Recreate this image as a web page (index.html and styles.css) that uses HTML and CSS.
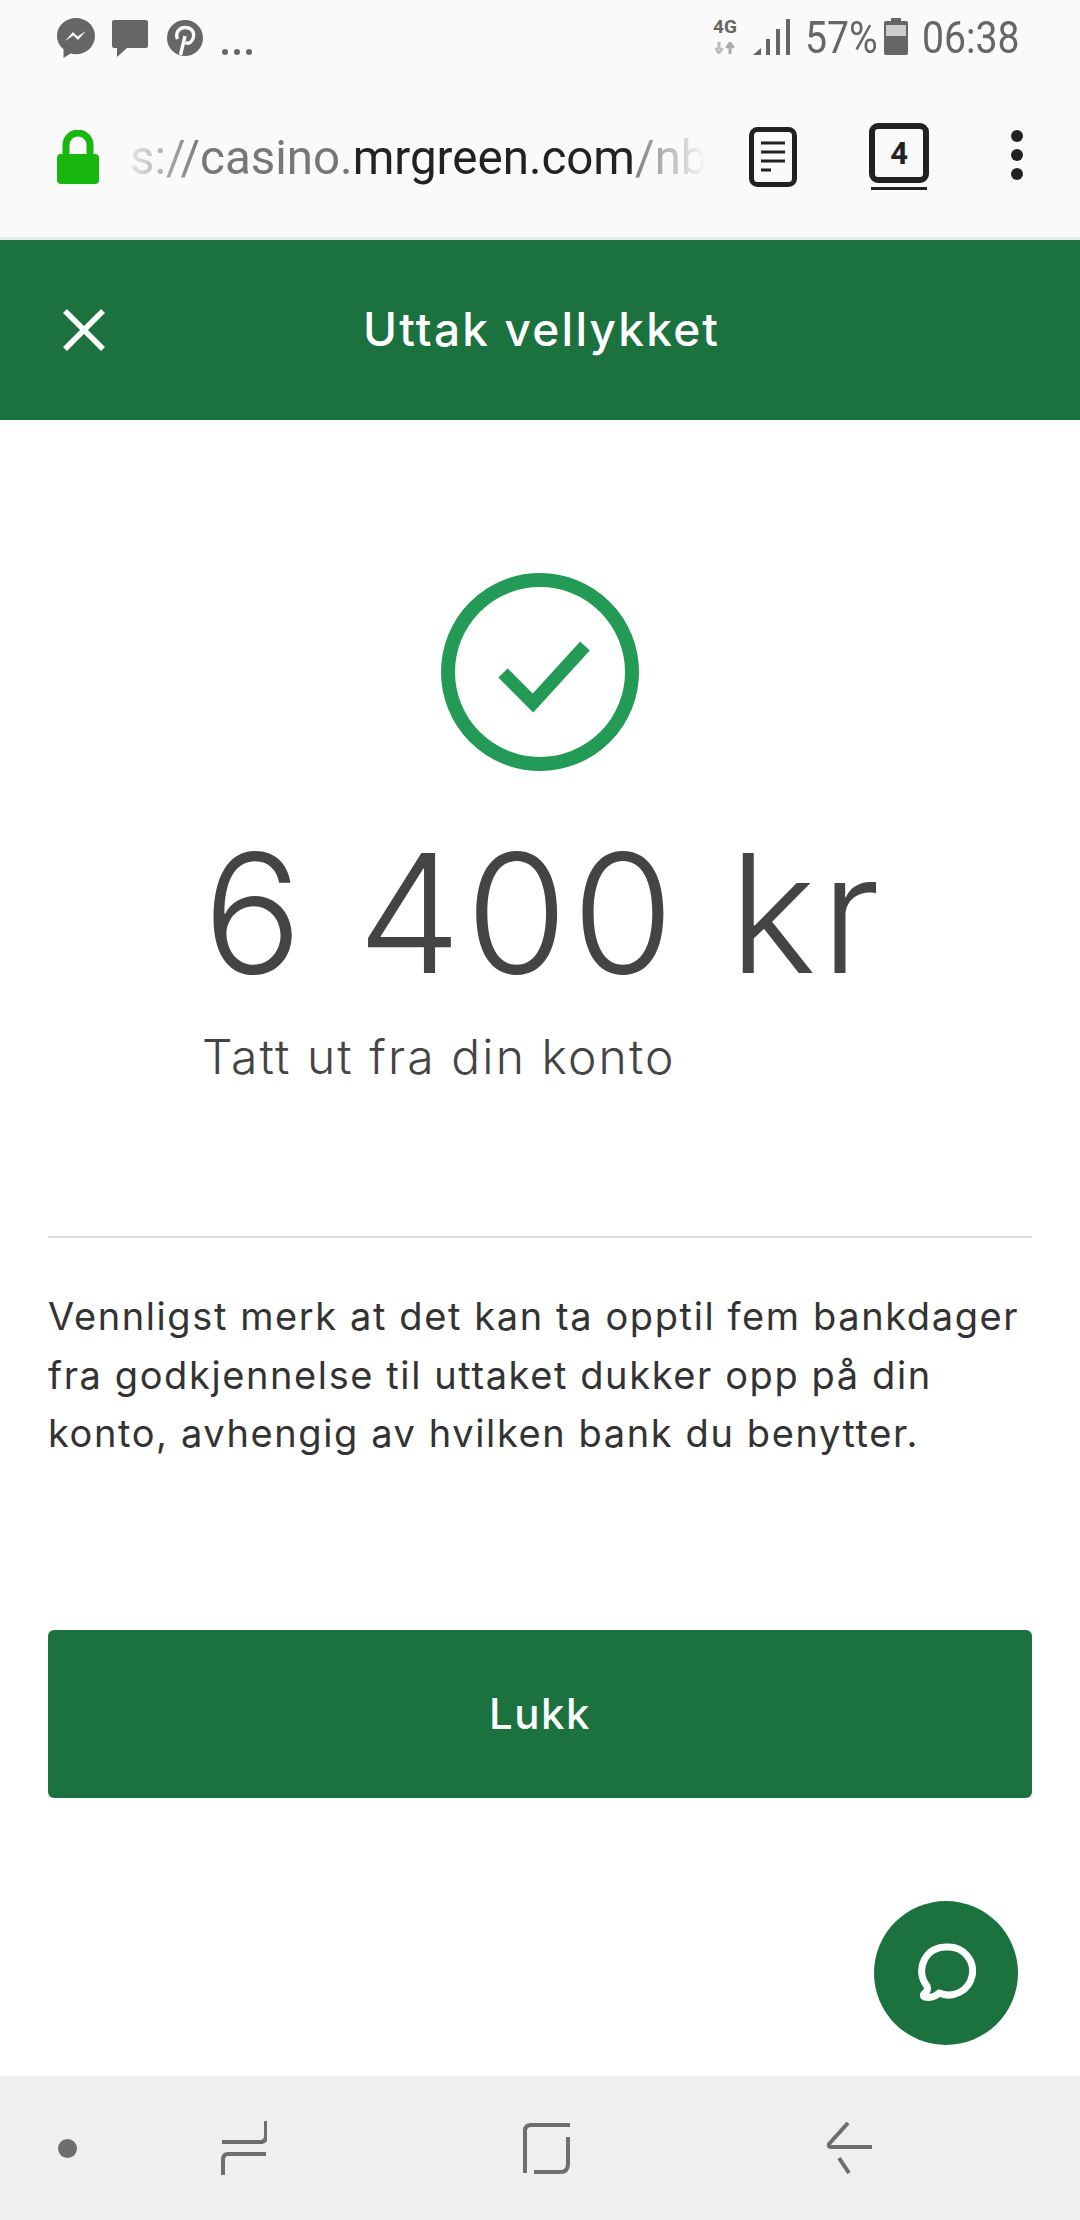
FILE: index.html
```html
<!DOCTYPE html>
<html lang="nb">
	<head>
		<meta charset="UTF-8" />
		<meta name="viewport" content="width=device-width, initial-scale=1.0" />
		<title>Uttak vellykket</title>
		<link rel="stylesheet" href="styles.css">
	</head>
	<body>
		<div class="statusbar">
			<div class="status-left">
				<svg class="ic-msg" viewBox="0 0 38 40"><path d="M19 0C8.500 0 0 7.900 0 17.800c0 5.400 2.500 10.100 6.500 13.400V40l7-4.400c1.700.4 3.600.7 5.500.7 10.500 0 19-8.200 19-18.300S29.500 0 19 0z" fill="#666"/><path d="M8 23l8-9 4.500 4.500L29 13l-8 9-4.500-4.500z" fill="#fafafa"/></svg>
				<svg class="ic-chat" viewBox="0 0 36 37"><path d="M2 0h32a2 2 0 0 1 2 2v24a2 2 0 0 1-2 2H15L5 37v-9H2a2 2 0 0 1-2-2V2a2 2 0 0 1 2-2z" fill="#666"/></svg>
				<svg class="ic-pin" viewBox="0 0 36 36"><circle cx="18" cy="18" r="18" fill="#666"/><path d="M13.500 35l4.500-19M10.500 19c-2.500-6 1.500-11.500 7.500-11.500 6.500 0 9.500 4.500 8.500 9.500s-5 7.500-8 5.500" fill="none" stroke="#fafafa" stroke-width="3.400"/></svg>
				<span class="status-more"></span>
			</div>
			<div class="status-right">
				<div class="net">
					<span class="net-label">4G</span>
					<svg class="net-arrows" viewBox="0 0 22 12"><path d="M5 0v7M1.500 6L5 11l3.500-5" fill="none" stroke="#bbb" stroke-width="3"/><path d="M16 12V4M12.500 6L16 1l3.500 5" fill="none" stroke="#aaa" stroke-width="3"/></svg>
				</div>
				<svg class="ic-signal" viewBox="0 0 37 36"><path d="M0 36l8-7v7zM13 20h4v16h-4zM23 10h4v26h-4zM33 0h4v36h-4z" fill="#666"/></svg>
				<span class="status-text pct">57%</span>
				<svg class="ic-battery" viewBox="0 0 24 37"><path d="M7 0h10v3h5a2 2 0 0 1 2 2v30a2 2 0 0 1-2 2H2a2 2 0 0 1-2-2V5a2 2 0 0 1 2-2h5z" fill="#666"/><rect x="2" y="7" width="20" height="11" fill="#ccc"/></svg>
				<span class="status-text clock">06:38</span>
			</div>
		</div>

		<div class="urlbar">
			<svg class="ic-lock" viewBox="0 0 42 54"><path d="M9 26V15a12 12 0 0 1 24 0v11" fill="none" stroke="#17b70f" stroke-width="7"/><rect y="24" width="42" height="30" rx="4" fill="#17b70f"/></svg>
			<div class="url"><span class="url-dim">s://casino.</span><span class="url-host">mrgreen.com</span><span class="url-dim">/nb</span></div>
			<svg class="ic-doc" viewBox="0 0 48 60"><rect x="2.500" y="2.500" width="43" height="55" rx="6" fill="none" stroke="#222" stroke-width="5"/><path d="M12 16h24M12 25h24M12 34h24M12 43h10" stroke="#222" stroke-width="3"/></svg>
			<div class="tabs"><span class="tabs-num">4</span></div>
			<div class="menu"><span></span><span></span><span></span></div>
		</div>

		<header class="topbar">
			<svg class="ic-close" viewBox="0 0 44 44"><path d="M3 3l38 38M41 3L3 41" fill="none" stroke="#fff" stroke-width="5.500"/></svg>
			<h1>Uttak vellykket</h1>
		</header>

		<main class="content">
			<svg class="ic-ok" viewBox="0 0 198 198"><circle cx="99" cy="99" r="92" fill="none" stroke="#239b56" stroke-width="14"/><path d="M62 100l30 30 52-57" fill="none" stroke="#239b56" stroke-width="13"/></svg>
			<div class="amount">6 400 kr</div>
			<div class="amount-note">Tatt ut fra din konto</div>
			<hr class="divider" />
			<p class="message">Vennligst merk at det kan ta opptil fem bankdager fra godkjennelse til uttaket dukker opp på din konto, avhengig av hvilken bank du benytter.</p>
			<button class="btn">Lukk</button>
			<div class="chat-fab">
				<svg viewBox="0 0 60 60"><path d="M32 4a24 24 0 1 1-9 46c-4 4-9 5-14 4-2-.5-2-2-1-3 3-2 4-5 3-8A24 24 0 0 1 32 4z" fill="none" stroke="#fff" stroke-width="7" stroke-linejoin="round"/></svg>
			</div>
		</main>

		<nav class="navbar">
			<span class="nav-dot"></span>
			<svg class="ic-recent" viewBox="0 0 46 54"><path d="M45 0v15q0 6-6 6H1M45 33H7q-5 0-5 6v15" fill="none" stroke="#6e6e6e" stroke-width="4"/></svg>
			<svg class="ic-home" viewBox="0 0 50 52"><path d="M48 3H9Q3 3 3 9v42M46 15v27q0 8-8 8H12" fill="none" stroke="#6e6e6e" stroke-width="4"/></svg>
			<svg class="ic-back" viewBox="0 0 46 52"><path d="M22 1L3 22q-1 3 2 3h41M13 36l10 15" fill="none" stroke="#6e6e6e" stroke-width="4"/></svg>
		</nav>
	</body>
</html>
```
FILE: styles.css
```css
:root {
	box-sizing: border-box;
}
*,
::before,
::after {
	box-sizing: inherit;
}
body {
	margin: 0;
	width: 1080px;
	height: 2220px;
	display: flex;
	flex-direction: column;
	overflow: hidden;
	background-color: #fff;
	font-family: Inter, "Noto Sans", sans-serif;
}
svg {
	display: block;
	flex: none;
}

/* status bar */
.statusbar {
	height: 90px;
	padding: 18px 62px 0 57px;
	display: flex;
	justify-content: space-between;
	align-items: flex-start;
	background-color: #fafafa;
}
.status-left,
.status-right {
	display: flex;
	align-items: flex-start;
}
.ic-msg {
	width: 38px;
	height: 40px;
}
.ic-chat {
	width: 36px;
	height: 37px;
	margin: 2px 0 0 17px;
}
.ic-pin {
	width: 36px;
	height: 36px;
	margin: 2px 0 0 19px;
}
.status-more {
	width: 6px;
	height: 6px;
	margin: 31px 0 0 19px;
	border-radius: 50%;
	background-color: #666;
	box-shadow: 12px 0 #666, 24px 0 #666;
}
.net {
	width: 28px;
	margin-right: 14px;
	display: flex;
	flex-direction: column;
	align-items: center;
}
.net-label {
	font: bold 19px/18px Roboto, sans-serif;
	color: #666;
}
.net-arrows {
	width: 22px;
	height: 12px;
	margin-top: 6px;
}
.ic-signal {
	width: 37px;
	height: 36px;
	margin: 1px 15px 0 0;
}
.status-text {
	font: 45px/36px Roboto, sans-serif;
	color: #666;
	transform-origin: left top;
	transform: scaleX(0.87);
	margin-top: 2px;
}
.pct {
	width: 79px;
}
.ic-battery {
	width: 24px;
	height: 37px;
	margin-right: 14px;
}
.clock {
	width: 96px;
}

/* url bar */
.urlbar {
	height: 150px;
	padding: 0 57px 24px;
	display: flex;
	align-items: center;
	background-color: #fafafa;
	border-bottom: 3px solid #e4ecea;
}
.ic-lock {
	width: 42px;
	height: 54px;
	margin-top: 10px;
}
.url {
	width: 582px;
	margin: 12px 0 0 31px;
	white-space: nowrap;
	font: 47.500px/60px Roboto, sans-serif;
	-webkit-mask-image: linear-gradient(to right, rgba(0, 0, 0, 0.15), #000 70px, #000 500px, transparent 576px);
	mask-image: linear-gradient(to right, rgba(0, 0, 0, 0.15), #000 70px, #000 500px, transparent 576px);
}
.url-dim {
	color: #777;
}
.url-host {
	color: #222;
}
.ic-doc {
	width: 48px;
	height: 60px;
	margin: 10px 0 0 38px;
}
.tabs {
	position: relative;
	width: 60px;
	height: 60px;
	margin: 3px 0 0 72px;
	display: flex;
	align-items: center;
	justify-content: center;
	border: 6px solid #222;
	border-radius: 9px;
}
.tabs::after {
	content: "";
	position: absolute;
	left: -4px;
	right: -4px;
	bottom: -13px;
	height: 3px;
	background-color: #222;
}
.tabs-num {
	font: bold 31px/1 Roboto, sans-serif;
	color: #222;
}
.menu {
	margin: 6px 0 0 82px;
	display: flex;
	flex-direction: column;
	gap: 7px;
}
.menu span {
	width: 12px;
	height: 12px;
	border-radius: 50%;
	background-color: #222;
}

/* green header */
.topbar {
	height: 180px;
	padding-left: 62px;
	display: flex;
	align-items: center;
	background-color: #1b723f;
	color: #fff;
}
.ic-close {
	width: 44px;
	height: 44px;
}
.topbar h1 {
	margin: -2px 0 0 257px;
	font-size: 46px;
	font-weight: 500;
	letter-spacing: 2.200px;
}

/* body */
.content {
	position: relative;
	flex: 1;
	padding: 153px 48px 0;
	display: flex;
	flex-direction: column;
}
.ic-ok {
	width: 198px;
	height: 198px;
	align-self: center;
}
.amount {
	margin: 42px 0 0 155px;
	font-size: 165px;
	line-height: 200px;
	font-weight: 300;
	letter-spacing: 4.400px;
	color: #444;
	white-space: nowrap;
}
.amount-note {
	margin: 14px 0 0 154px;
	font-size: 48px;
	line-height: 60px;
	font-weight: 300;
	letter-spacing: 2.100px;
	color: #444;
}
.divider {
	margin: 149px 0 0;
	border: 0;
	height: 2px;
	background-color: #ddd;
}
.message {
	margin: 49px 0 0;
	font-size: 38px;
	line-height: 58.500px;
	letter-spacing: 1.600px;
	color: #333;
}
.btn {
	height: 168px;
	margin-top: 167px;
	border: 0;
	border-radius: 6px;
	background-color: #1b723f;
	color: #fff;
	font: 500 42px Inter, sans-serif;
	letter-spacing: 1.500px;
}
.chat-fab {
	position: absolute;
	right: 62px;
	bottom: 31px;
	width: 144px;
	height: 144px;
	display: flex;
	align-items: center;
	justify-content: center;
	border-radius: 50%;
	background-color: #1b723f;
}
.chat-fab svg {
	width: 60px;
	height: 60px;
}

/* android nav */
.navbar {
	position: relative;
	height: 144px;
	flex: none;
	padding-left: 58px;
	display: flex;
	align-items: center;
	background-color: #efefef;
}
.nav-dot {
	width: 19px;
	height: 19px;
	border-radius: 50%;
	background-color: #6e6e6e;
}
.ic-recent {
	width: 46px;
	height: 54px;
	margin-left: 144px;
}
.ic-home {
	width: 50px;
	height: 52px;
	margin-left: 255px;
}
.ic-back {
	width: 46px;
	height: 52px;
	margin-left: 254px;
}
```
